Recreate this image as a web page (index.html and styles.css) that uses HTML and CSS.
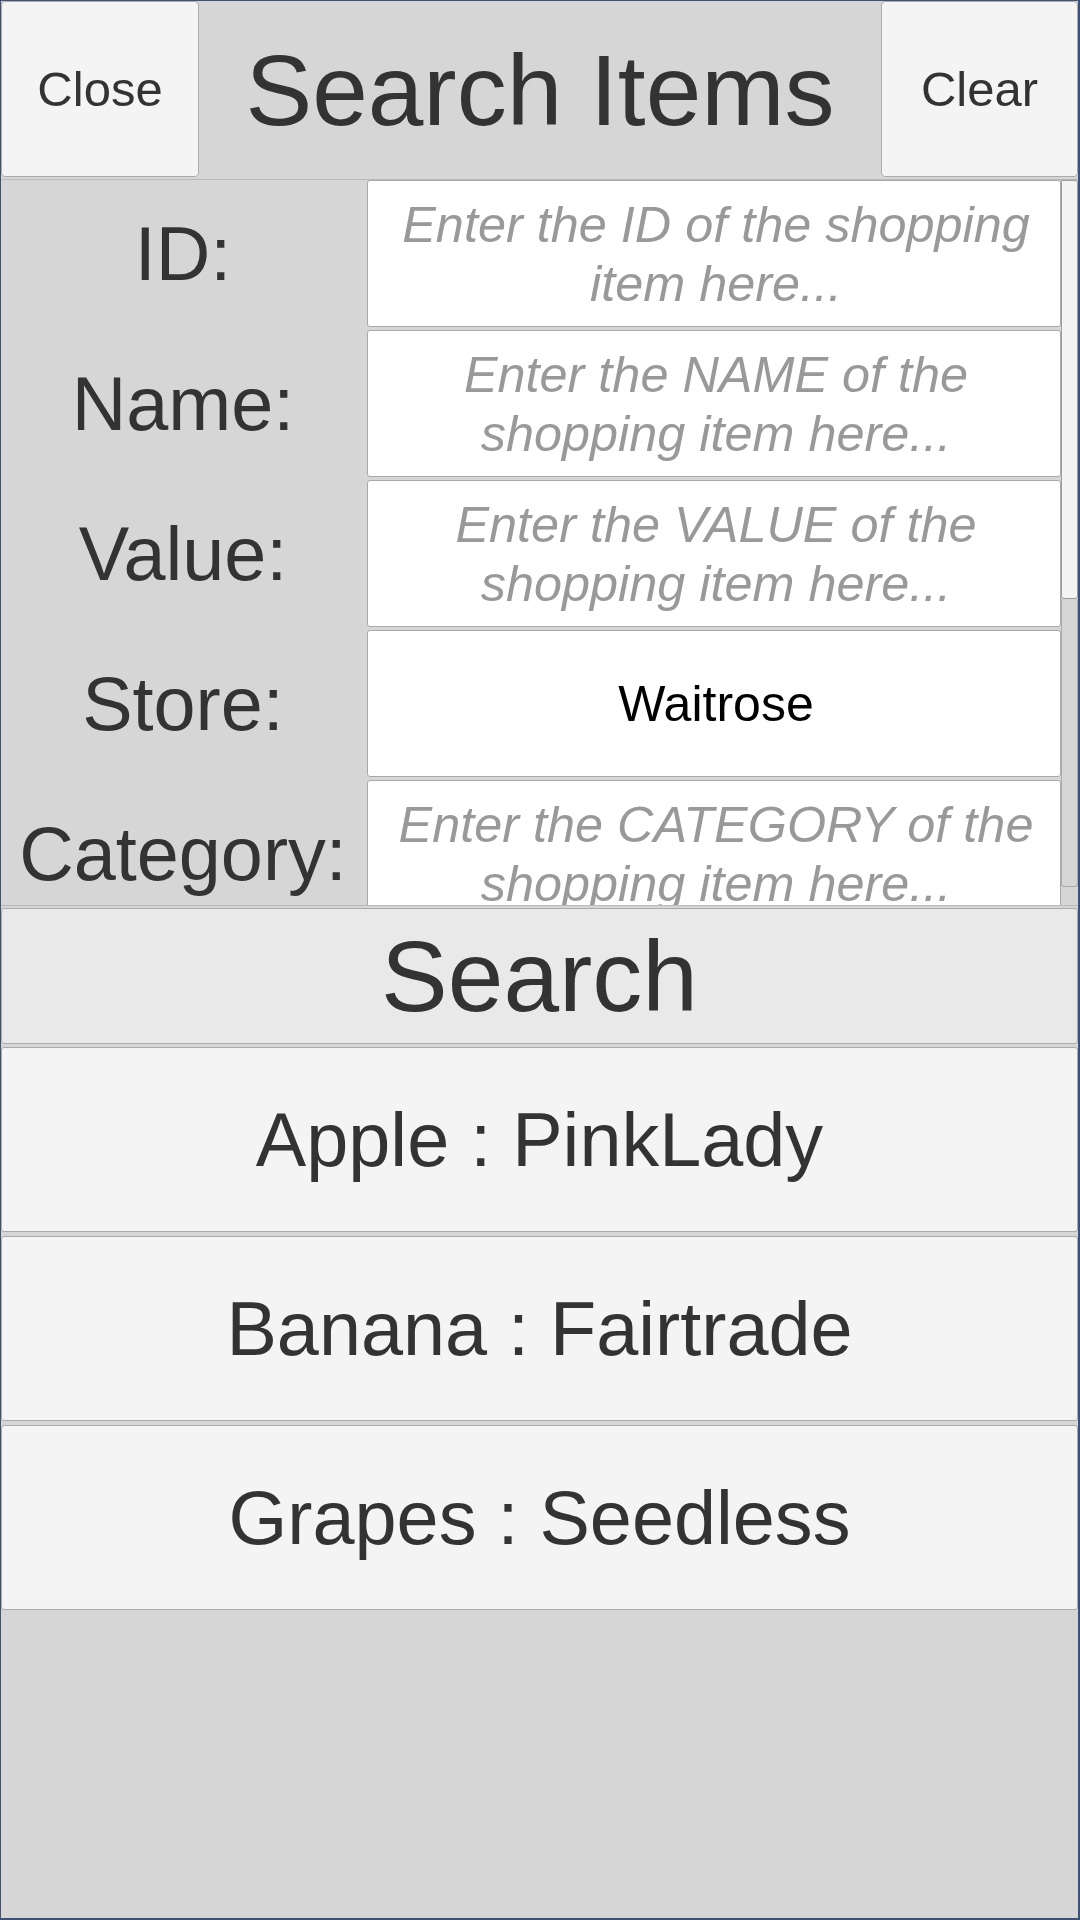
FILE: index.html
```html
<!DOCTYPE html>
<html lang="en">
<head>
<meta charset="utf-8">
<title>Search Items</title>
<link rel="stylesheet" href="styles.css">
</head>
<body>
<div class="frame">
  <header class="header">
    <div class="btn btn-close">Close</div>
    <div class="title">Search Items</div>
    <div class="btn btn-clear">Clear</div>
  </header>
  <section class="form">
    <div class="rows">
      <div class="row">
        <div class="label">ID:</div>
        <div class="field placeholder">Enter the ID of the shopping item here...</div>
      </div>
      <div class="row">
        <div class="label">Name:</div>
        <div class="field placeholder">Enter the NAME of the shopping item here...</div>
      </div>
      <div class="row">
        <div class="label">Value:</div>
        <div class="field placeholder">Enter the VALUE of the shopping item here...</div>
      </div>
      <div class="row">
        <div class="label">Store:</div>
        <div class="field value">Waitrose</div>
      </div>
      <div class="row">
        <div class="label">Category:</div>
        <div class="field placeholder">Enter the CATEGORY of the shopping item here...</div>
      </div>
    </div>
    <div class="scrollbar">
      <div class="thumb"></div>
      <div class="track"></div>
    </div>
  </section>
  <div class="search-btn">Search</div>
  <div class="results">
    <div class="result">Apple : PinkLady</div>
    <div class="result">Banana : Fairtrade</div>
    <div class="result">Grapes : Seedless</div>
  </div>
</div>
</body>
</html>
```

FILE: styles.css
```css
* {
  box-sizing: border-box;
}

html, body {
  margin: 0;
  padding: 0;
}

body {
  font-family: "Liberation Sans", Arial, sans-serif;
  color: #333333;
}

.frame {
  width: 1080px;
  height: 1920px;
  background: #d6d6d6;
  border-style: solid;
  border-color: #3f5276;
  border-width: 1px 2px 2px 1px;
  display: flex;
  flex-direction: column;
  overflow: hidden;
}

.header {
  display: flex;
  height: 179px;
  flex-shrink: 0;
  border-bottom: 1px solid #b9b9b9;
}

.btn {
  height: 176px;
  background: #f4f4f4;
  border: 1px solid #ababab;
  border-radius: 4px;
  font-size: 49px;
  display: flex;
  align-items: center;
  justify-content: center;
}

.btn-close {
  width: 198px;
}

.btn-clear {
  width: 197px;
}

.title {
  flex: 1;
  display: flex;
  align-items: center;
  justify-content: center;
  font-size: 100px;
  white-space: nowrap;
}

.form {
  display: flex;
  height: 726px;
  flex-shrink: 0;
  border-bottom: 1px solid #b9b9b9;
}

.rows {
  flex: 1;
  display: flex;
  flex-direction: column;
  gap: 3px;
  overflow: hidden;
}

.row {
  display: flex;
  height: 147px;
  flex-shrink: 0;
}

.label {
  width: 366px;
  padding-right: 2px;
  display: flex;
  align-items: center;
  justify-content: center;
  font-size: 75.6px;
  white-space: nowrap;
}

.field {
  flex: 1;
  background: #ffffff;
  border: 1px solid #a9a9a9;
  border-radius: 3px;
  display: flex;
  align-items: center;
  justify-content: center;
  text-align: center;
  font-size: 50.4px;
  padding: 0 14px 0 18px;
}

.placeholder {
  font-style: italic;
  color: #999999;
}

.value {
  color: #000000;
  font-size: 50px;
}

.scrollbar {
  width: 17px;
  display: flex;
  flex-direction: column;
  padding-bottom: 18px;
}

.thumb {
  height: 419px;
  background: #f4f4f4;
  border: 1px solid #9c9c9c;
  border-radius: 0 3px 3px 3px;
}

.track {
  flex: 1;
  background: #d6d6d6;
  border: 1px solid #a9a9a9;
  border-top: none;
  border-radius: 0 0 3px 3px;
}

.search-btn {
  margin-top: 2px;
  height: 136px;
  flex-shrink: 0;
  background: #e9e9e9;
  border: 1px solid #ababab;
  border-radius: 3px;
  display: flex;
  align-items: center;
  justify-content: center;
  font-size: 100px;
}

.results {
  display: flex;
  flex-direction: column;
  gap: 4px;
  margin-top: 3px;
}

.result {
  height: 185px;
  background: #f4f4f4;
  border: 1px solid #ababab;
  border-radius: 3px;
  display: flex;
  align-items: center;
  justify-content: center;
  font-size: 75.6px;
  white-space: nowrap;
}
```
